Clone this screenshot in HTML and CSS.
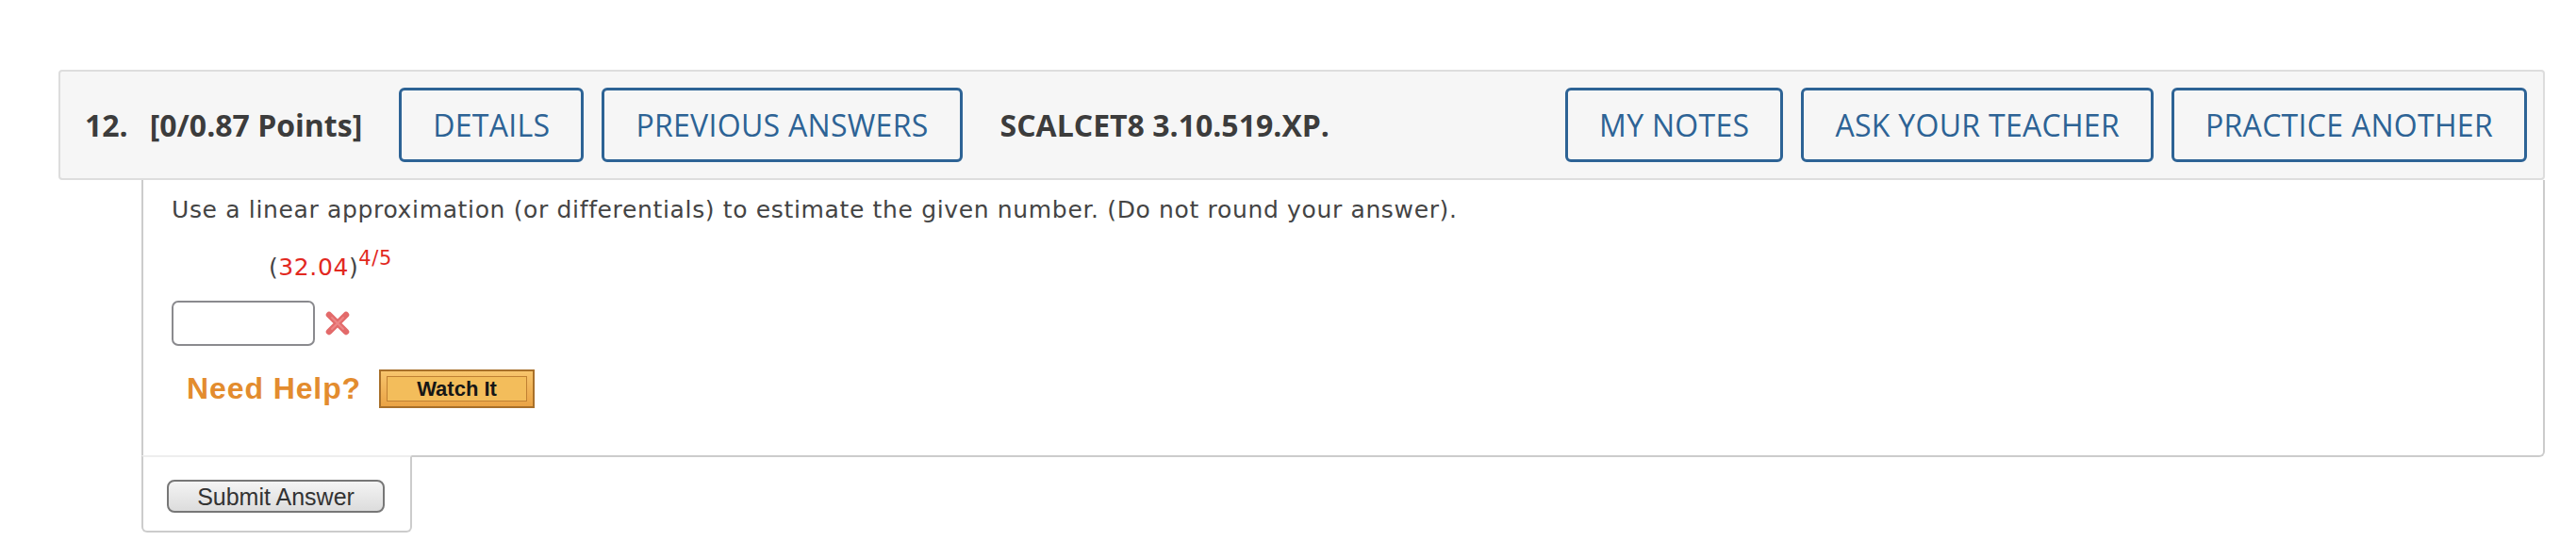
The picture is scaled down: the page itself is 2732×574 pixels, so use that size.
FILE: index.html
```html
<!DOCTYPE html>
<html lang="en">
<head>
<meta charset="utf-8">
<title>Question 12</title>
<link rel="stylesheet" href="styles.css">
</head>
<body>
<div class="page">
  <div class="q-header">
    <span class="q-num">12.</span>
    <span class="q-points">[0/0.87 Points]</span>
    <button class="hbtn first">DETAILS</button>
    <button class="hbtn">PREVIOUS ANSWERS</button>
    <span class="q-code">SCALCET8 3.10.519.XP.</span>
    <div class="spacer"></div>
    <button class="hbtn">MY NOTES</button>
    <button class="hbtn">ASK YOUR TEACHER</button>
    <button class="hbtn">PRACTICE ANOTHER</button>
  </div>
  <div class="q-body">
    <p class="prompt">Use a linear approximation (or differentials) to estimate the given number. (Do not round your answer).</p>
    <div class="math"><span class="paren">(</span><span class="red">32.04</span><span class="paren">)</span><sup class="red sup">4/5</sup></div>
    <div class="answer-row">
      <input class="answer" type="text" aria-label="answer">
      <svg class="wrong" width="30" height="28" viewBox="0 0 30 28" aria-hidden="true">
        <path d="M6 5 L24 23 M24 5 L6 23" stroke="#e36a6a" stroke-width="6.5" stroke-linecap="round"/>
        <path d="M9 8 L21 20 M21 8 L9 20" stroke="#ec8686" stroke-width="2" stroke-linecap="round"/>
      </svg>
    </div>
    <div class="help-row">
      <span class="need-help">Need Help?</span>
      <span class="watch"><span class="watch-inner">Watch It</span></span>
    </div>
  </div>
  <div class="submit-box">
    <button class="submit">Submit Answer</button>
  </div>
</div>
</body>
</html>
```

FILE: styles.css
```css
html, body {
  margin: 0;
  padding: 0;
  background: #ffffff;
}

.page {
  padding: 74px 33px 0 62px;
}

.q-header {
  display: flex;
  align-items: center;
  gap: 19px;
  background: #f6f6f6;
  border: 2px solid #dddddd;
  border-radius: 4px;
  padding: 17px 17px 17px 26px;
  font-family: "Open Sans", "Liberation Sans", sans-serif;
  color: #3c3c3c;
}

.q-num {
  font-weight: 700;
  font-size: 32px;
  margin-right: 4px;
}

.q-points {
  font-weight: 700;
  font-size: 32px;
  margin-right: 20px;
}

.q-code {
  font-weight: 700;
  font-size: 32px;
  margin-left: 21px;
}

.spacer {
  flex: 1;
}

.hbtn {
  font-family: "Open Sans", "Liberation Sans", sans-serif;
  font-size: 32px;
  line-height: 43px;
  letter-spacing: 0.3px;
  color: #2d6395;
  background: transparent;
  border: 3px solid #2d6395;
  border-radius: 6px;
  padding: 15px 33px;
  margin: 0;
  white-space: nowrap;
}

.q-body {
  margin-left: 88px;
  border: 2px solid #cccccc;
  border-top: none;
  border-radius: 0 0 6px 0;
  padding: 17px 30px 50px 30px;
  font-family: "DejaVu Sans", Verdana, sans-serif;
  color: #444444;
}

.prompt {
  margin: 0;
  font-size: 25px;
  letter-spacing: 0.65px;
  line-height: 30px;
}

.math {
  margin: 31px 0 0 103px;
  font-size: 25px;
  letter-spacing: 0.6px;
  line-height: 30px;
}

.red {
  color: #e2291f;
}

.sup {
  font-size: 21px;
  line-height: 0;
  vertical-align: 11px;
}

.answer-row {
  display: flex;
  align-items: center;
  gap: 9px;
  margin-top: 20px;
}

.answer {
  width: 152px;
  height: 48px;
  box-sizing: border-box;
  border: 2px solid #8a8a8e;
  border-radius: 7px;
  background: #ffffff;
  margin: 0;
  padding: 0 6px;
}

.help-row {
  display: flex;
  align-items: center;
  gap: 19px;
  margin-top: 25px;
  padding-left: 16px;
}

.need-help {
  font-family: "Liberation Sans", Arial, sans-serif;
  font-weight: 700;
  font-size: 32px;
  letter-spacing: 0.9px;
  color: #e38c2e;
}

.watch {
  display: inline-flex;
  box-sizing: border-box;
  width: 165px;
  height: 41px;
  padding: 5px 6px;
  border: 2px solid #a8702a;
  background: linear-gradient(#f7c56d, #eaa345);
}

.watch-inner {
  flex: 1;
  display: flex;
  align-items: center;
  justify-content: center;
  border: 1.5px solid #c08033;
  background: #f3bd5b;
  font-family: "Liberation Sans", Arial, sans-serif;
  font-weight: 700;
  font-size: 22px;
  color: #161616;
}

.submit-box {
  position: relative;
  width: 287px;
  box-sizing: border-box;
  margin: -2px 0 0 88px;
  background: #ffffff;
  border: 2px solid #cccccc;
  border-top: 2px solid #eeeeee;
  border-radius: 0 0 6px 6px;
  padding: 24px 0 19px 25px;
}

.submit {
  width: 231px;
  height: 35px;
  font-family: "Liberation Sans", Arial, sans-serif;
  font-size: 25px;
  line-height: 28px;
  color: #333333;
  background: linear-gradient(#f4f4f4, #dcdcdc);
  border: 2px solid #777777;
  border-radius: 8px;
  padding: 0;
  margin: 0;
}
```
